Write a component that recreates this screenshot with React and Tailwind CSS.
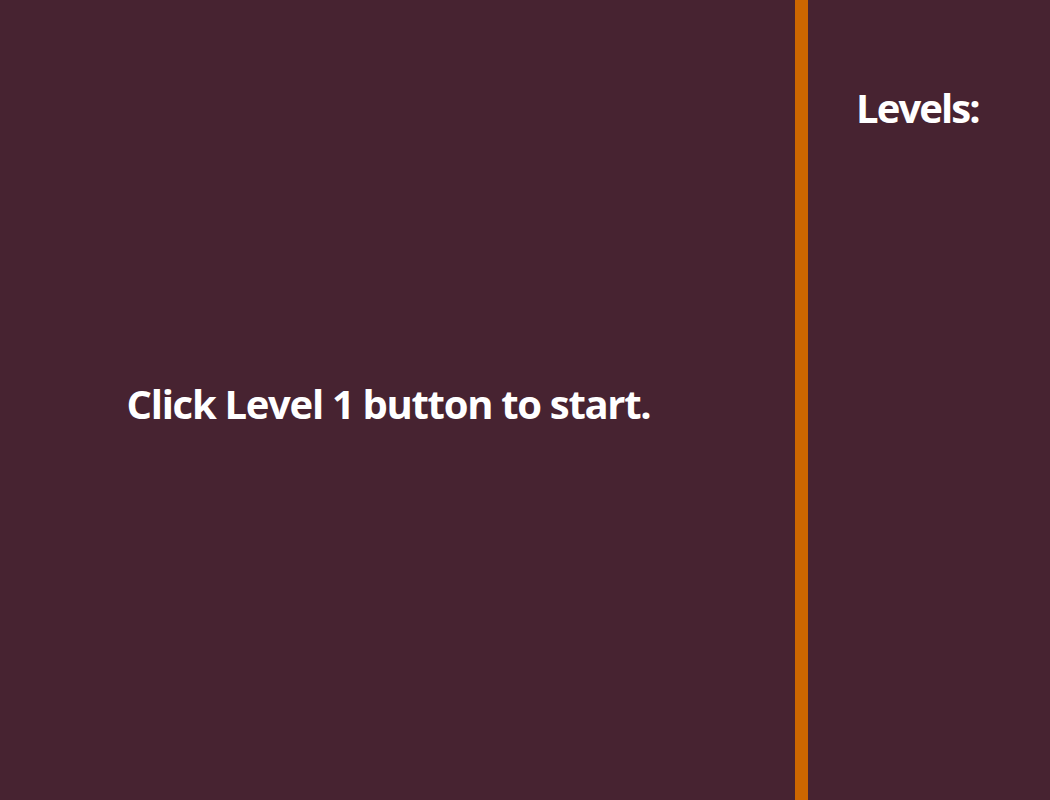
export default function App() {
  return (
    <div className="flex h-[800px] w-[1050px] bg-[#472331] text-white" style={{ fontFamily: '"Open Sans", "Noto Sans", sans-serif' }}>
      <div className="flex w-[795px] shrink-0 items-center justify-center pr-[18px] pt-[8px]">
        <h2 className="text-[40px] font-bold leading-none tracking-[-1.3px]">Click Level 1 button to start.</h2>
      </div>
      <div className="w-[13px] shrink-0 bg-[#cc6600]" />
      <div className="flex-1 pl-[48px] pt-[88px]">
        <h2 className="text-[40px] font-bold leading-none tracking-[-1.9px]">Levels:</h2>
      </div>
    </div>
  );
}
